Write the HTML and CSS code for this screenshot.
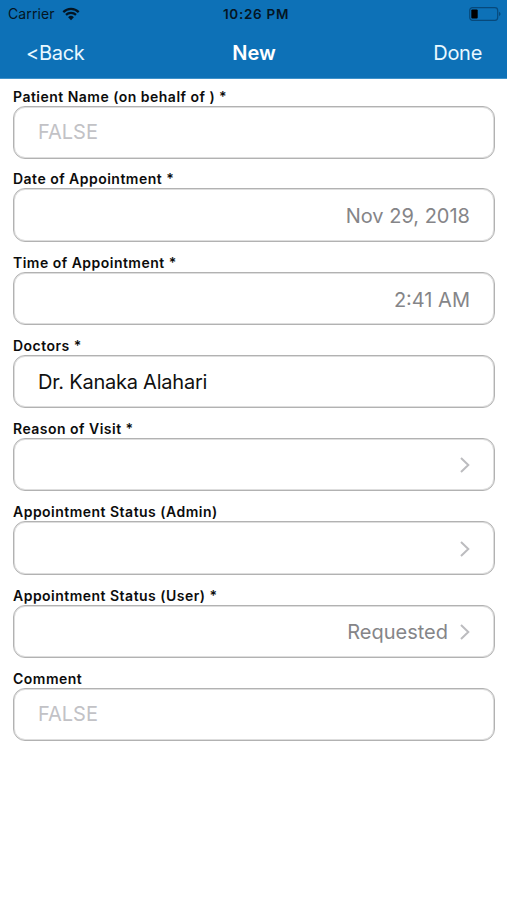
FILE: index.html
```html
<!DOCTYPE html>
<html lang="en">
<head>
  <meta charset="UTF-8" />
  <title>New Appointment</title>
  <link rel="stylesheet" href="styles.css">
</head>
<body>

  <header class="header">
    <div class="status-bar">
      <div class="carrier">
        <span>Carrier</span>
        <svg class="wifi" width="18" height="14" viewBox="0 0 18 14">
          <path d="M1.3 5.1a10.9 10.9 0 0 1 15.4 0M4 7.9a7.1 7.1 0 0 1 10 0" fill="none" stroke="#041523" stroke-width="2.2"/>
          <path d="M9 13.3L6.1 10.3a4.1 4.1 0 0 1 5.8 0z" fill="#041523"/>
        </svg>
      </div>
      <span class="time">10:26 PM</span>
      <svg class="battery" width="32" height="14" viewBox="0 0 32 14">
        <rect x=".7" y=".7" width="28" height="12.6" rx="2.8" fill="none" stroke="#07497b" stroke-width="1.2"/>
        <rect x="2.3" y="2.4" width="6.4" height="9.2" rx="1" fill="#000"/>
        <path d="M30 4.8q3.2 2.2 0 4.4z" fill="#07497b"/>
      </svg>
    </div>
    <nav class="nav-bar">
      <a class="back" href="#">&lt;Back</a>
      <h1>New</h1>
      <a class="done" href="#">Done</a>
    </nav>
  </header>

  <main class="form">
    <div class="field">
      <div class="label">Patient Name (on behalf of ) *</div>
      <div class="box input placeholder"><span>FALSE</span></div>
    </div>
    <div class="field">
      <div class="label">Date of Appointment *</div>
      <div class="box picker"><span>Nov 29, 2018</span></div>
    </div>
    <div class="field">
      <div class="label">Time of Appointment *</div>
      <div class="box picker"><span>2:41 AM</span></div>
    </div>
    <div class="field">
      <div class="label">Doctors *</div>
      <div class="box input doctor"><span>Dr. Kanaka Alahari</span></div>
    </div>
    <div class="field">
      <div class="label">Reason of Visit *</div>
      <div class="box picker">
        <svg class="chevron" width="10" height="16" viewBox="0 0 10 16"><path d="M1 1l7.3 7L1 15"/></svg>
      </div>
    </div>
    <div class="field">
      <div class="label">Appointment Status (Admin)</div>
      <div class="box picker">
        <svg class="chevron" width="10" height="16" viewBox="0 0 10 16"><path d="M1 1l7.3 7L1 15"/></svg>
      </div>
    </div>
    <div class="field">
      <div class="label">Appointment Status (User) *</div>
      <div class="box picker">
        <span>Requested</span>
        <svg class="chevron" width="10" height="16" viewBox="0 0 10 16"><path d="M1 1l7.3 7L1 15"/></svg>
      </div>
    </div>
    <div class="field">
      <div class="label">Comment</div>
      <div class="box input placeholder"><span>FALSE</span></div>
    </div>
  </main>

</body>
</html>
```

FILE: styles.css
```css
* {
  box-sizing: border-box;
}

body {
  margin: 0;
  font-family: Inter, 'Liberation Sans', sans-serif;
  background-color: #fff;
}

.header {
  height: 79px;
  background-color: #0d71b7;
  border-bottom: 1px solid #3f92ca;
}

.status-bar {
  display: grid;
  grid-template-columns: 1fr auto 1fr;
  align-items: center;
  height: 27px;
  padding: 0 6px 0 8px;
  font-size: 14px;
  color: #041523;
}

.carrier {
  display: flex;
  align-items: center;
  gap: 7px;
  letter-spacing: 0.1px;
}

.time {
  padding-left: 3px;
  font-size: 13.5px;
  font-weight: 600;
  letter-spacing: 0.7px;
}

.battery {
  justify-self: end;
}

.nav-bar {
  display: grid;
  grid-template-columns: 1fr auto 1fr;
  align-items: center;
  height: 51px;
  padding: 0 25px 0 26px;
  font-size: 20px;
  color: #fff;
}

.nav-bar a {
  color: #e8f8ff;
  letter-spacing: -0.3px;
  text-decoration: none;
}

.nav-bar h1 {
  margin: 0;
  font-size: 20px;
  font-weight: 600;
}

.done {
  justify-self: end;
}

.form {
  padding: 9px 12px 0 13px;
}

.field {
  margin-bottom: 11.8px;
}

.label {
  height: 18px;
  line-height: 18px;
  font-size: 14px;
  font-weight: 600;
  letter-spacing: 0.48px;
  color: #0c0c0c;
  white-space: nowrap;
}

.box {
  display: flex;
  align-items: center;
  padding: 0 24px;
  border: 1px solid #b2b2b2;
  border-radius: 12px;
  box-shadow: inset 0 0 0 1px #dedede;
  font-size: 20px;
}

.input {
  height: 52.5px;
  color: #111;
}

.placeholder {
  color: #c2c2c6;
}

.doctor {
  letter-spacing: -0.23px;
}

.picker {
  height: 53.7px;
  padding-top: 2px;
  justify-content: flex-end;
  gap: 12px;
  color: #858588;
}

.chevron path {
  fill: none;
  stroke: #bcbcbf;
  stroke-width: 2;
}
```
